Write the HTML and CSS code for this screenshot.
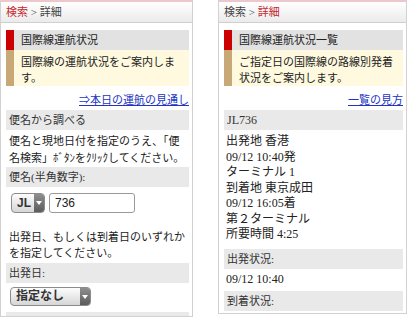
FILE: index.html
```html
<!DOCTYPE html>
<html>
	<head>
		<meta charset="utf-8"/>
		<link rel="stylesheet" href="styles.css">
		<title>国際線運航状況</title>
	</head>
	<body>
		<div class="screens">
			<div class="screen screen-search">
				<div class="crumbs"><span class="crumb-on">検索</span> &gt; <span>詳細</span></div>
				<div class="screen-body">
					<div class="intro">
						<div class="intro-mark"></div>
						<div class="intro-title">国際線運航状況</div>
						<div class="intro-mark intro-mark-sub"></div>
						<div class="intro-text">国際線の運航状況をご案内します。</div>
					</div>
					<p class="more"><a href="#">⇒本日の運航の見通し</a></p>
					<div class="bar">便名から調べる</div>
					<p class="note note-flight">便名と現地日付を指定のうえ、「便名検索」ﾎﾞﾀﾝをｸﾘｯｸしてください。</p>
					<div class="bar">便名(半角数字):</div>
					<div class="field-row">
						<div class="select select-airline">
							<span class="select-label">JL</span>
							<span class="select-arrow"></span>
						</div>
						<input class="flight-no" type="text" value="736" autocomplete="off">
					</div>
					<p class="note note-date">出発日、もしくは到着日のいずれかを指定してください。</p>
					<div class="bar">出発日:</div>
					<div class="select select-date">
						<span class="select-label">指定なし</span>
						<span class="select-arrow"></span>
					</div>
					<div class="bar bar-last">到着日:</div>
				</div>
			</div>
			<div class="screen screen-result">
				<div class="crumbs"><span>検索</span> &gt; <span class="crumb-on">詳細</span></div>
				<div class="screen-body">
					<div class="intro">
						<div class="intro-mark"></div>
						<div class="intro-title">国際線運航状況一覧</div>
						<div class="intro-mark intro-mark-sub"></div>
						<div class="intro-text">ご指定日の国際線の路線別発着状況をご案内します。</div>
					</div>
					<p class="more"><a href="#">一覧の見方</a></p>
					<div class="bar bar-flight">JL736</div>
					<div class="flight-info">
						<div>出発地 香港</div>
						<div>09/12 10:40発</div>
						<div>ターミナル 1</div>
						<div>到着地 東京成田</div>
						<div>09/12 16:05着</div>
						<div>第２ターミナル</div>
						<div>所要時間 4:25</div>
					</div>
					<div class="bar bar-status">出発状況:</div>
					<div class="status-time">09/12 10:40</div>
					<div class="bar bar-arrive">到着状況:</div>
				</div>
			</div>
		</div>
	</body>
</html>
```
FILE: styles.css
```css
body {
	margin: 0;
	background-color: #fff;
	color: #222;
	font-family: "Liberation Serif", "Noto Sans CJK JP", serif;
	font-size: 11px;
	line-height: 16px;
}
.screens {
	display: flex;
	align-items: flex-start;
	gap: 25px;
}
.screen {
	box-sizing: border-box;
	border: 1px solid #d2d2d2;
	border-top: 2px solid #ecc8cc;
	overflow: hidden;
}
.screen-search {
	width: 193px;
	height: 317px;
}
.screen-result {
	width: 189px;
	height: 314px;
}
.crumbs {
	height: 20px;
	line-height: 20px;
	padding-left: 5px;
	color: #444;
	background: linear-gradient(#fff, #ebebeb);
	border-bottom: 1px solid #cfcfcf;
}
.crumb-on {
	color: #c8282e;
}
.screen-body {
	padding: 7px 3px 0 5px;
}
.intro {
	display: grid;
	grid-template-columns: 8px 1fr;
}
.intro-mark {
	background-color: #cc0000;
}
.intro-mark-sub {
	background-color: #c8a876;
}
.intro-title {
	height: 20px;
	line-height: 20px;
	padding-left: 7px;
	background-color: #e2e2e2;
}
.intro-text {
	padding: 4px 3px 0 7px;
	background-color: #fffadf;
}
.more {
	margin: 6px 0 2px;
	text-align: right;
}
.more a {
	color: #2235c2;
	text-decoration: underline;
}
.bar {
	height: 20px;
	line-height: 20px;
	padding-left: 3px;
	color: #333;
	background-color: #e9e9e9;
}
.note {
	margin: 0;
	padding-left: 3px;
}
.note-flight {
	margin-top: 3px;
	line-height: 17px;
}
.note-date {
	margin-top: 16px;
	margin-bottom: 2px;
}
.field-row {
	display: flex;
	gap: 4px;
	margin: 6px 0 0 5px;
}
.select {
	box-sizing: border-box;
	display: flex;
	height: 20px;
	border: 1px solid #8c8c8c;
	border-radius: 4px;
	background: linear-gradient(#fdfdfd, #d6d6d6);
	overflow: hidden;
}
.select-airline {
	width: 34px;
}
.select-date {
	width: 81px;
	height: 19px;
	margin: 4px 0 0 4px;
}
.select-label {
	flex: 1;
	padding-left: 5px;
	font-family: "Liberation Sans", "Noto Sans CJK JP", sans-serif;
	font-weight: bold;
	font-size: 12px;
	line-height: 18px;
	color: #333;
}
.select-date .select-label {
	line-height: 17px;
}
.select-arrow {
	width: 10px;
	display: flex;
	align-items: center;
	justify-content: center;
	background: linear-gradient(#8e8e8e, #5c5c5c);
}
.select-arrow::after {
	content: "";
	border-left: 3px solid transparent;
	border-right: 3px solid transparent;
	border-top: 4px solid #fff;
}
.flight-no {
	box-sizing: border-box;
	width: 86px;
	height: 20px;
	margin: 0;
	padding: 0 5px;
	border: 1px solid #999;
	border-radius: 3px;
	font-family: "Liberation Sans", sans-serif;
	font-size: 12px;
	color: #222;
	background-color: #fff;
}
.bar-last {
	margin-top: 6px;
}
.bar-flight {
	font-size: 12px;
}
.flight-info {
	padding: 4px 0 0 2px;
	font-size: 12px;
	line-height: 15.5px;
}
.bar-status {
	margin-top: 6px;
}
.status-time {
	margin-top: 2px;
	padding-left: 2px;
	font-size: 12px;
}
.bar-arrive {
	margin-top: 4px;
}
```
